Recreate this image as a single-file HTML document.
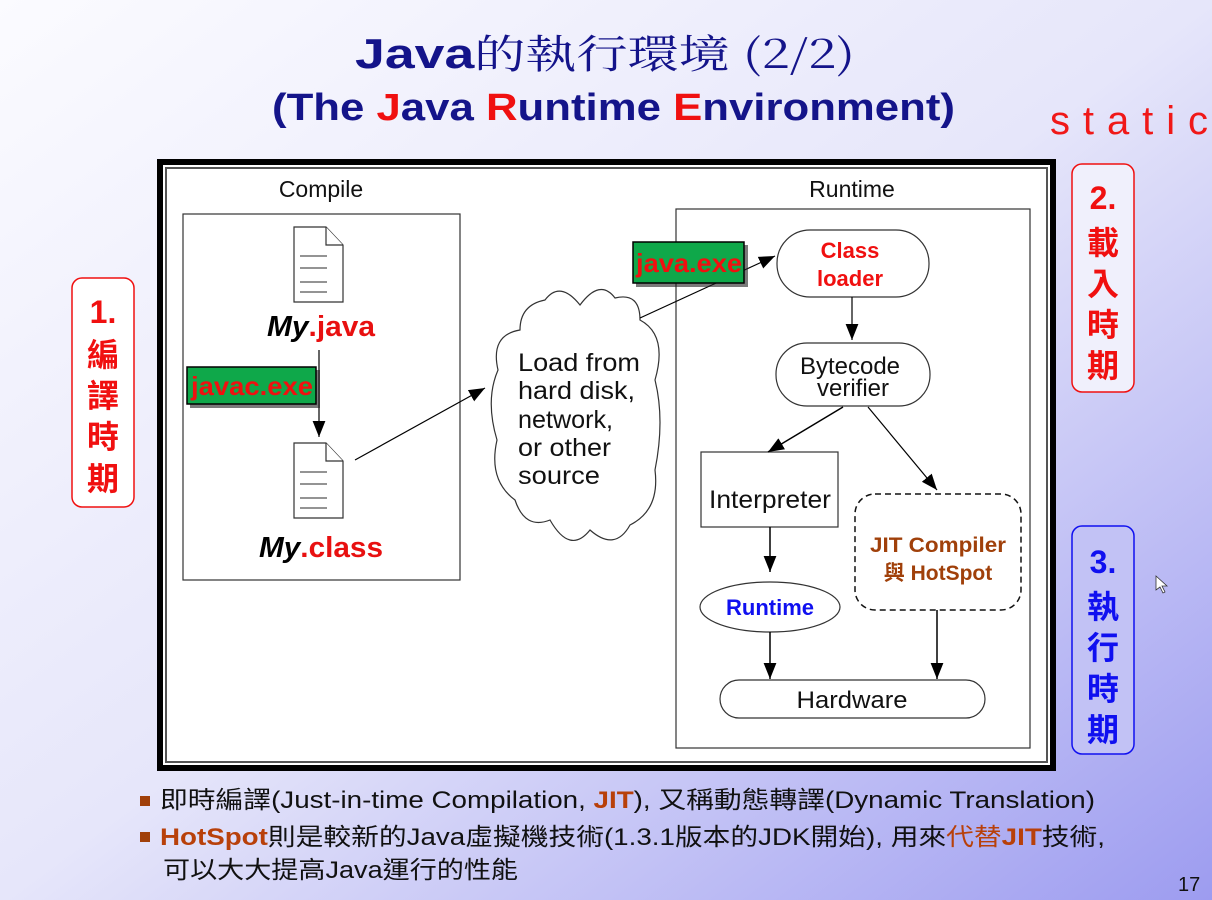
<!DOCTYPE html>
<html><head><meta charset="utf-8"><style>
html,body{margin:0;padding:0;width:1212px;height:900px;overflow:hidden}
svg{display:block}
text{font-family:"Liberation Sans","Noto Sans CJK TC",sans-serif}
</style></head><body>
<svg width="1212" height="900" viewBox="0 0 1212 900" xmlns="http://www.w3.org/2000/svg">
<defs>
<linearGradient id="bg" x1="0" y1="0" x2="1" y2="1">
<stop offset="0" stop-color="#fbfbff"/><stop offset="0.5" stop-color="#e6e6fa"/><stop offset="1" stop-color="#9d9cf0"/>
</linearGradient>
<marker id="ahb" viewBox="0 0 10 10" refX="10" refY="5" markerWidth="16" markerHeight="16" markerUnits="userSpaceOnUse" orient="auto"><path d="M0,1L10,5L0,9z" fill="#000"/></marker>
</defs>
<rect width="1212" height="900" fill="url(#bg)"/>
<!-- title -->
<text x="355" y="68" font-size="42" font-weight="bold" fill="#14148a" textLength="500" lengthAdjust="spacingAndGlyphs"><tspan>Java</tspan><tspan font-family="'Noto Serif CJK SC',serif" font-weight="normal" font-size="40">的執行環境 (2/2)</tspan></text>
<text x="272" y="120" font-size="38" font-weight="bold" fill="#14148a" textLength="683" lengthAdjust="spacingAndGlyphs">(The <tspan fill="#f01010">J</tspan>ava <tspan fill="#f01010">R</tspan>untime <tspan fill="#f01010">E</tspan>nvironment)</text>
<text x="1050" y="134" font-size="40" fill="#f01818" font-family="'DejaVu Sans',sans-serif" font-weight="200" textLength="158" lengthAdjust="spacing">static</text>
<!-- frame -->
<rect x="160" y="162" width="893" height="606" fill="#fff" stroke="#000" stroke-width="6"/>
<rect x="166" y="168" width="881" height="594" fill="none" stroke="#555" stroke-width="2"/>
<text x="321" y="197" text-anchor="middle" font-size="23" fill="#111">Compile</text>
<rect x="183" y="214" width="277" height="366" fill="none" stroke="#333" stroke-width="1.2"/>
<g fill="#fff" stroke="#333" stroke-width="1.2">
<path d="M294,227H326L343,245V302H294Z"/><path d="M326,227V245H343"/>
<path d="M294,443H326L343,461V518H294Z"/><path d="M326,443V461H343"/>
</g>
<g stroke="#555" stroke-width="1.2">
<path d="M300,256H327M300,268H327M300,282H327M300,292H327"/>
<path d="M300,472H327M300,484H327M300,498H327M300,508H327"/>
</g>
<text x="267" y="336" font-size="29" font-weight="bold" textLength="108" lengthAdjust="spacingAndGlyphs"><tspan font-style="italic" fill="#000">My</tspan><tspan fill="#e81010">.java</tspan></text>
<text x="259" y="557" font-size="29" font-weight="bold" textLength="124" lengthAdjust="spacingAndGlyphs"><tspan font-style="italic" fill="#000">My</tspan><tspan fill="#e81010">.class</tspan></text>
<line x1="319" y1="350" x2="319" y2="437" stroke="#000" stroke-width="1.2" marker-end="url(#ahb)"/>
<rect x="190" y="370" width="130" height="38" fill="#222" opacity="0.6"/>
<rect x="187" y="367" width="129" height="37" fill="#0fa84a" stroke="#000" stroke-width="1.5"/>
<text x="191" y="395" font-size="26" font-weight="bold" fill="#f01010" textLength="122" lengthAdjust="spacingAndGlyphs">javac.exe</text>
<line x1="355" y1="460" x2="485" y2="388" stroke="#000" stroke-width="1.2" marker-end="url(#ahb)"/>
<!-- cloud -->
<path d="M545,300 Q560,280 580,305 Q600,278 615,298 Q640,292 640,320 Q668,335 655,380 Q665,420 655,470 Q660,510 630,525 Q615,552 590,530 Q570,555 550,520 Q525,530 515,500 Q488,480 497,440 Q485,400 498,370 Q490,335 520,330 Q520,305 545,300Z" fill="#fff" stroke="#333" stroke-width="1.2"/>
<g font-size="25" fill="#111"><text x="518" y="371" textLength="122" lengthAdjust="spacingAndGlyphs">Load from</text><text x="518" y="399" textLength="117" lengthAdjust="spacingAndGlyphs">hard disk,</text><text x="518" y="428" textLength="95" lengthAdjust="spacingAndGlyphs">network,</text><text x="518" y="456" textLength="93" lengthAdjust="spacingAndGlyphs">or other</text><text x="518" y="484" textLength="82" lengthAdjust="spacingAndGlyphs">source</text></g>
<!-- runtime -->
<text x="852" y="197" text-anchor="middle" font-size="23" fill="#111">Runtime</text>
<rect x="676" y="209" width="354" height="539" fill="none" stroke="#333" stroke-width="1.2"/>
<rect x="777" y="230" width="152" height="67" rx="33" fill="#fff" stroke="#333" stroke-width="1.2"/>
<line x1="640" y1="318" x2="775" y2="256" stroke="#000" stroke-width="1.2" marker-end="url(#ahb)"/>
<rect x="636" y="245" width="112" height="42" fill="#222" opacity="0.6"/>
<rect x="633" y="242" width="111" height="41" fill="#0fa84a" stroke="#000" stroke-width="1.5"/>
<text x="636" y="272" font-size="26" font-weight="bold" fill="#f01010" textLength="106" lengthAdjust="spacingAndGlyphs">java.exe</text>
<text x="850" y="258" text-anchor="middle" font-size="22" font-weight="bold" fill="#f01010">Class</text>
<text x="850" y="286" text-anchor="middle" font-size="22" font-weight="bold" fill="#f01010">loader</text>
<line x1="852" y1="297" x2="852" y2="340" stroke="#000" stroke-width="1.2" marker-end="url(#ahb)"/>
<rect x="776" y="343" width="154" height="63" rx="31" fill="#fff" stroke="#333" stroke-width="1.2"/>
<text x="850" y="374" text-anchor="middle" font-size="24" fill="#111">Bytecode</text>
<text x="853" y="396" text-anchor="middle" font-size="24" fill="#111">verifier</text>
<rect x="701" y="452" width="137" height="75" fill="#fff" stroke="#333" stroke-width="1.2"/>
<text x="770" y="508" text-anchor="middle" font-size="25" fill="#111" textLength="122" lengthAdjust="spacingAndGlyphs">Interpreter</text>
<line x1="843" y1="407" x2="768" y2="452" stroke="#000" stroke-width="1.5" marker-end="url(#ahb)"/>
<line x1="868" y1="407" x2="937" y2="490" stroke="#000" stroke-width="1.2" marker-end="url(#ahb)"/>
<line x1="770" y1="527" x2="770" y2="572" stroke="#000" stroke-width="1.5" marker-end="url(#ahb)"/>
<ellipse cx="770" cy="607" rx="70" ry="25" fill="#fff" stroke="#333" stroke-width="1.2"/>
<text x="770" y="615" text-anchor="middle" font-size="22" font-weight="bold" fill="#1010f0">Runtime</text>
<rect x="855" y="494" width="166" height="116" rx="20" fill="#fff" stroke="#111" stroke-width="1.5" stroke-dasharray="6,4"/>
<text x="938" y="552" text-anchor="middle" font-size="21" font-weight="bold" fill="#a0400a" textLength="136" lengthAdjust="spacingAndGlyphs">JIT Compiler</text>
<text x="938" y="580" text-anchor="middle" font-size="21" font-weight="bold" fill="#a0400a">與  HotSpot</text>
<line x1="770" y1="632" x2="770" y2="679" stroke="#000" stroke-width="1.5" marker-end="url(#ahb)"/>
<line x1="937" y1="610" x2="937" y2="679" stroke="#000" stroke-width="1.5" marker-end="url(#ahb)"/>
<rect x="720" y="680" width="265" height="38" rx="19" fill="#fff" stroke="#333" stroke-width="1.2"/>
<text x="852" y="708" text-anchor="middle" font-size="24" fill="#111" textLength="111" lengthAdjust="spacingAndGlyphs">Hardware</text>
<!-- side labels -->
<rect x="72" y="278" width="62" height="229" rx="10" fill="#fff" stroke="#f01010" stroke-width="1.5"/>
<g font-size="32" font-weight="bold" fill="#f01010" text-anchor="middle">
<text x="103" y="323">1.</text><text x="103" y="366">編</text><text x="103" y="407">譯</text><text x="103" y="448">時</text><text x="103" y="490">期</text>
</g>
<rect x="1072" y="164" width="62" height="228" rx="10" fill="#f0f0fc" stroke="#f01010" stroke-width="1.5"/>
<g font-size="32" font-weight="bold" fill="#f01010" text-anchor="middle">
<text x="1103" y="209">2.</text><text x="1103" y="254">載</text><text x="1103" y="295">入</text><text x="1103" y="336">時</text><text x="1103" y="377">期</text>
</g>
<rect x="1072" y="526" width="62" height="228" rx="10" fill="#c2c2f5" stroke="#1010f0" stroke-width="1.5"/>
<g font-size="32" font-weight="bold" fill="#1010f0" text-anchor="middle">
<text x="1103" y="573">3.</text><text x="1103" y="618">執</text><text x="1103" y="659">行</text><text x="1103" y="700">時</text><text x="1103" y="741">期</text>
</g>
<path d="M1156,576 L1156,590 L1160,587 L1163,593 L1165,592 L1162,586 L1167,586Z" fill="#fff" stroke="#333" stroke-width="0.8"/>
<!-- bullets -->
<rect x="140" y="796" width="10" height="10" fill="#a0400a"/>
<rect x="140" y="832" width="10" height="10" fill="#a0400a"/>
<g font-size="24" fill="#111">
<text x="160" y="808" textLength="935" lengthAdjust="spacingAndGlyphs">即時編譯(Just-in-time Compilation, <tspan fill="#b8400a" font-weight="bold">JIT</tspan>), 又稱動態轉譯(Dynamic Translation)</text>
<text x="160" y="845" textLength="945" lengthAdjust="spacingAndGlyphs"><tspan fill="#b8400a" font-weight="bold">HotSpot</tspan>則是較新的Java虛擬機技術(1.3.1版本的JDK開始), 用來<tspan fill="#b8400a">代替</tspan><tspan fill="#b8400a" font-weight="bold">JIT</tspan>技術,</text>
<text x="163" y="878" textLength="355" lengthAdjust="spacingAndGlyphs">可以大大提高Java運行的性能</text>
</g>
<text x="1178" y="891" font-size="20" fill="#111">17</text>
</svg>
</body></html>
